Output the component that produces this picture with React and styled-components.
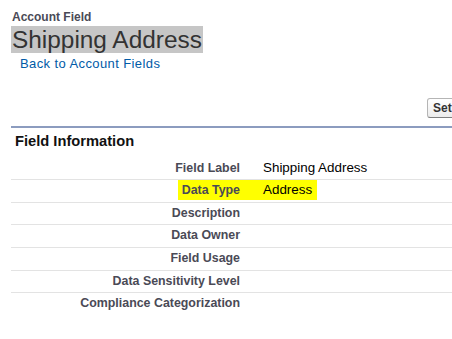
import React from 'react';
import styled, { createGlobalStyle } from 'styled-components';

const GlobalStyle = createGlobalStyle`
  html, body {
    margin: 0;
    padding: 0;
    overflow: hidden;
    background: #fff;
  }
  body {
    font-family: "Liberation Sans", Arial, sans-serif;
    color: #000;
  }
`;

const rows = [
  { label: 'Field Label', value: 'Shipping Address' },
  { label: 'Data Type', value: 'Address', highlight: true },
  { label: 'Description', value: '' },
  { label: 'Data Owner', value: '' },
  { label: 'Field Usage', value: '' },
  { label: 'Data Sensitivity Level', value: '' },
  { label: 'Compliance Categorization', value: '' },
];

export default function App() {
  return (
    <>
      <GlobalStyle />
      <Page>
        <PageHeader>
          <Kicker>Account Field</Kicker>
          <Title>
            <TitleText>Shipping Address</TitleText>
          </Title>
          <BackLink href="#">Back to Account Fields</BackLink>
        </PageHeader>

        <ButtonRow>
          <Button type="button">Set</Button>
        </ButtonRow>

        <Section>
          <SectionTitle>Field Information</SectionTitle>
          <DetailList>
            {rows.map((row) => (
              <Row key={row.label}>
                <LabelCell>
                  <LabelText $highlight={row.highlight}>{row.label}</LabelText>
                </LabelCell>
                <ValueCell>
                  <ValueText $highlight={row.highlight}>{row.value}</ValueText>
                </ValueCell>
              </Row>
            ))}
          </DetailList>
        </Section>
      </Page>
    </>
  );
}

const Page = styled.div`
  width: 640px;
  padding: 0 0 0 11px;
  box-sizing: border-box;
`;

const PageHeader = styled.div`
  display: flex;
  flex-direction: column;
  align-items: flex-start;
  padding-top: 10px;
`;

const Kicker = styled.span`
  font-size: 12px;
  font-weight: bold;
  line-height: 15px;
  color: #4a4a56;
  padding-left: 1px;
`;

const Title = styled.h1`
  margin: 1px 0 0;
  font-size: 24.4px;
  font-weight: normal;
  line-height: 27px;
  color: #333;
`;

const TitleText = styled.span`
  display: inline-block;
  background: #c6c6c6;
  padding: 0 1px;
`;

const BackLink = styled.a`
  margin: 3px 0 0 9px;
  font-size: 13px;
  line-height: 16px;
  letter-spacing: 0.4px;
  color: #015ba7;
  text-decoration: none;
`;

const ButtonRow = styled.div`
  display: flex;
  padding: 26px 0 0 416px;
  white-space: nowrap;
`;

const Button = styled.button`
  height: 20px;
  padding: 0 24px 0 5px;
  border: 1px solid #b5b5b5;
  border-bottom-color: #7f7f7f;
  border-radius: 3px;
  background: linear-gradient(#ffffff, #ececec);
  font-family: "Liberation Sans", Arial, sans-serif;
  font-size: 12px;
  font-weight: bold;
  color: #333;
  line-height: 18px;
`;

const Section = styled.div`
  margin-top: 8px;
  border-top: 2px solid #8c9cbf;
`;

const SectionTitle = styled.h3`
  margin: 4px 0 0 4px;
  font-size: 14.7px;
  font-weight: bold;
  line-height: 18px;
  color: #111;
`;

const DetailList = styled.div`
  display: flex;
  flex-direction: column;
  margin-top: 7.6px;
`;

const Row = styled.div`
  display: flex;
  align-items: flex-start;
  height: 21.6px;
  border-bottom: 1px solid #e3e3e3;

  &:last-child {
    border-bottom: none;
  }
`;

const LabelCell = styled.div`
  width: 241px;
  flex-shrink: 0;
  display: flex;
  justify-content: flex-end;
`;

const LabelText = styled.span`
  display: inline-block;
  height: 20px;
  padding: 0 12px 0 4px;
  font-size: 12.4px;
  font-weight: bold;
  line-height: 20px;
  color: #4a4a56;
  background: ${(p) => (p.$highlight ? '#ffff00' : 'transparent')};
`;

const ValueCell = styled.div`
  display: flex;
`;

const ValueText = styled.span`
  display: inline-block;
  height: 20px;
  padding: 0 5px 0 11px;
  font-size: 13.4px;
  line-height: 20px;
  color: #000;
  background: ${(p) => (p.$highlight ? '#ffff00' : 'transparent')};
`;
